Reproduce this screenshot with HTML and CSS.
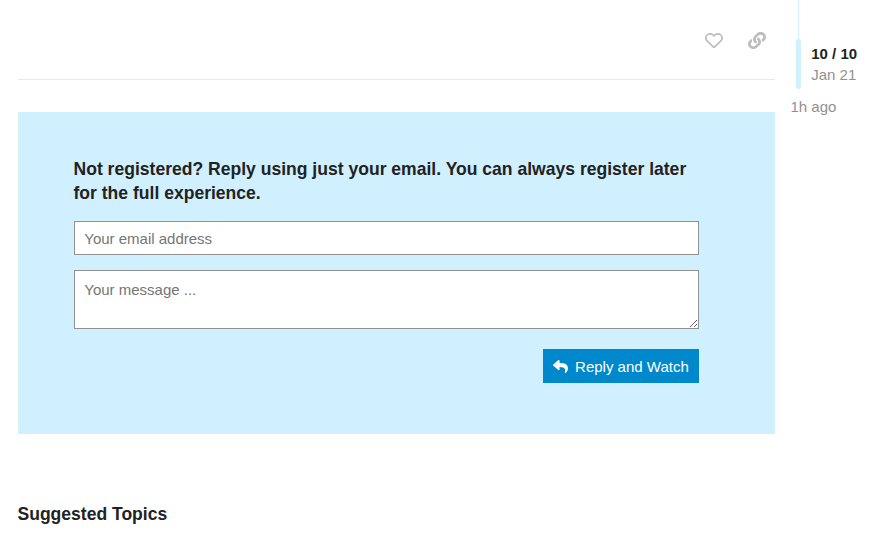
FILE: index.html
```html
<!DOCTYPE html>
<html lang="en">
<head>
<meta charset="utf-8">
<title>Topic</title>
<link rel="stylesheet" href="styles.css">
</head>
<body>
<div class="layout">
  <main class="topic">
    <div class="post-controls">
      <svg class="icon" viewBox="0 0 512 512" preserveAspectRatio="none"><path d="M458.4 64.3C400.6 15.7 311.3 23 256 79.3 200.7 23 111.4 15.6 53.6 64.3-21.6 127.6-10.6 230.8 43 285.5l175.4 178.7c10 10.2 23.4 15.9 37.6 15.9 14.3 0 27.6-5.6 37.6-15.8L469 285.6c53.5-54.7 64.7-157.9-10.6-221.3zm-23.6 187.5L259.4 430.5c-2.4 2.4-4.4 2.4-6.8 0L77.2 251.8c-36.5-37.2-43.9-107.6 7.3-150.7 38.9-32.7 98.9-27.8 136.5 10.5l35 35.7 35-35.7c37.8-38.5 97.8-43.2 136.5-10.6 51.1 43.1 43.5 113.9 7.3 150.8z"/></svg>
      <svg class="icon" viewBox="0 0 512 512" preserveAspectRatio="none"><path d="M326.612 185.391c59.747 59.809 58.927 155.698.36 214.59-.11.12-.24.25-.36.37l-67.2 67.2c-59.27 59.27-155.699 59.262-214.96 0-59.27-59.26-59.27-155.7 0-214.96l37.106-37.106c9.84-9.84 26.786-3.3 27.294 10.606.648 17.722 3.826 35.527 9.69 52.721 1.986 5.822.567 12.262-3.783 16.612l-13.087 13.087c-28.026 28.026-28.905 73.66-1.155 101.96 28.024 28.579 74.086 28.749 102.325.51l67.2-67.19c28.191-28.191 28.073-73.757 0-101.83-3.701-3.694-7.429-6.564-10.341-8.569a16.037 16.037 0 0 1-6.947-12.606c-.396-10.567 3.348-21.456 11.698-29.806l21.054-21.055c5.521-5.521 14.182-6.199 20.584-1.731a152.482 152.482 0 0 1 20.522 17.197zM467.547 44.449c-59.261-59.262-155.69-59.27-214.96 0l-67.2 67.2c-.12.12-.25.25-.36.37-58.566 58.892-59.387 154.781.36 214.59a152.454 152.454 0 0 0 20.521 17.196c6.402 4.468 15.064 3.789 20.584-1.731l21.054-21.055c8.35-8.35 12.094-19.239 11.698-29.806a16.037 16.037 0 0 0-6.947-12.606c-2.912-2.005-6.64-4.875-10.341-8.569-28.073-28.073-28.191-73.639 0-101.83l67.2-67.19c28.239-28.239 74.3-28.069 102.325.51 27.75 28.3 26.872 73.934-1.155 101.96l-13.087 13.087c-4.35 4.35-5.769 10.79-3.783 16.612 5.864 17.194 9.042 34.999 9.69 52.721.509 13.906 17.454 20.446 27.294 10.606l37.106-37.106c59.271-59.259 59.271-155.699.001-214.959z"/></svg>
    </div>
    <form class="reply-box">
      <h3 class="reply-title">Not registered? Reply using just your email. You can always register later for the full experience.</h3>
      <input class="field" type="text" placeholder="Your email address">
      <textarea class="field message" placeholder="Your message ..."></textarea>
      <button class="reply-button" type="button">
        <svg class="reply-icon" viewBox="0 0 512 512"><path d="M8.309 189.836L184.313 37.851C199.719 24.546 224 35.347 224 56.015v80.053c160.629 1.839 288 34.032 288 186.258 0 61.441-39.581 122.309-83.333 154.132-13.653 9.931-33.111-2.533-28.077-18.631 45.344-145.012-21.507-183.51-176.59-185.742V360c0 20.7-24.3 31.453-39.687 18.164l-176.004-152c-11.071-9.562-11.086-26.753 0-36.328z"/></svg>
        <span>Reply and Watch</span>
      </button>
    </form>
    <h3 class="suggested">Suggested Topics</h3>
  </main>
  <aside class="timeline">
    <div class="track"></div>
    <div class="scroller">
      <div class="handle"></div>
      <div class="position">
        <div class="count">10 / 10</div>
        <div>Jan 21</div>
      </div>
    </div>
    <div class="last-reply">1h ago</div>
  </aside>
</div>
</body>
</html>
```
FILE: styles.css
```css
* {
  box-sizing: border-box;
}

body {
  margin: 0;
  overflow: hidden;
  background: #fff;
  color: #222;
  font: 15px/21px "Liberation Sans", Arial, sans-serif;
}

.layout {
  display: flex;
  gap: 16px;
  height: 541px;
  padding-left: 17.5px;
}

.topic {
  width: 757.5px;
}

.post-controls {
  display: flex;
  justify-content: flex-end;
  gap: 25px;
  height: 80px;
  padding: 32px 9px 0 0;
  border-bottom: 1px solid #e9e9e9;
}

.icon {
  width: 18px;
  height: 17px;
  fill: #bdbdbd;
}

.reply-box {
  display: flex;
  flex-direction: column;
  height: 322px;
  margin-top: 32px;
  padding: 45px 76px 0 56px;
  background: #d1f0ff;
}

.reply-title {
  margin: 0 0 16px;
  font-size: 17.56px;
  line-height: 24px;
}

.field {
  display: block;
  width: 625px;
  height: 34px;
  margin: 0 0 15px;
  padding: 8px 9.75px;
  border: 1px solid #919191;
  border-radius: 0;
  background: #fff;
  font: inherit;
}

.message {
  height: 59px;
  margin-bottom: 20px;
  resize: both;
}

.reply-button {
  display: flex;
  align-items: center;
  align-self: flex-end;
  gap: 6.75px;
  height: 34px;
  padding: 0 10.25px 0 10px;
  border: 0;
  background: #0088cc;
  color: #fff;
  font: inherit;
}

.reply-icon {
  width: 15px;
  height: 15px;
  fill: #fff;
}

.suggested {
  margin: 68px 0 0;
  font-size: 17.55px;
  line-height: 24px;
}

.timeline {
  flex: 1;
  color: #919191;
}

.track {
  width: 1px;
  height: 39px;
  margin-left: 7px;
  background: #d1f0ff;
}

.scroller {
  display: flex;
  gap: 10.25px;
  height: 50px;
  margin-left: 5px;
}

.handle {
  width: 5px;
  height: 50px;
  border-radius: 3px;
  background: #d1f0ff;
}

.position {
  padding-top: 4px;
}

.count {
  color: #222;
  font-weight: bold;
}

.last-reply {
  margin: 7px 0 0 -0.5px;
}
```
